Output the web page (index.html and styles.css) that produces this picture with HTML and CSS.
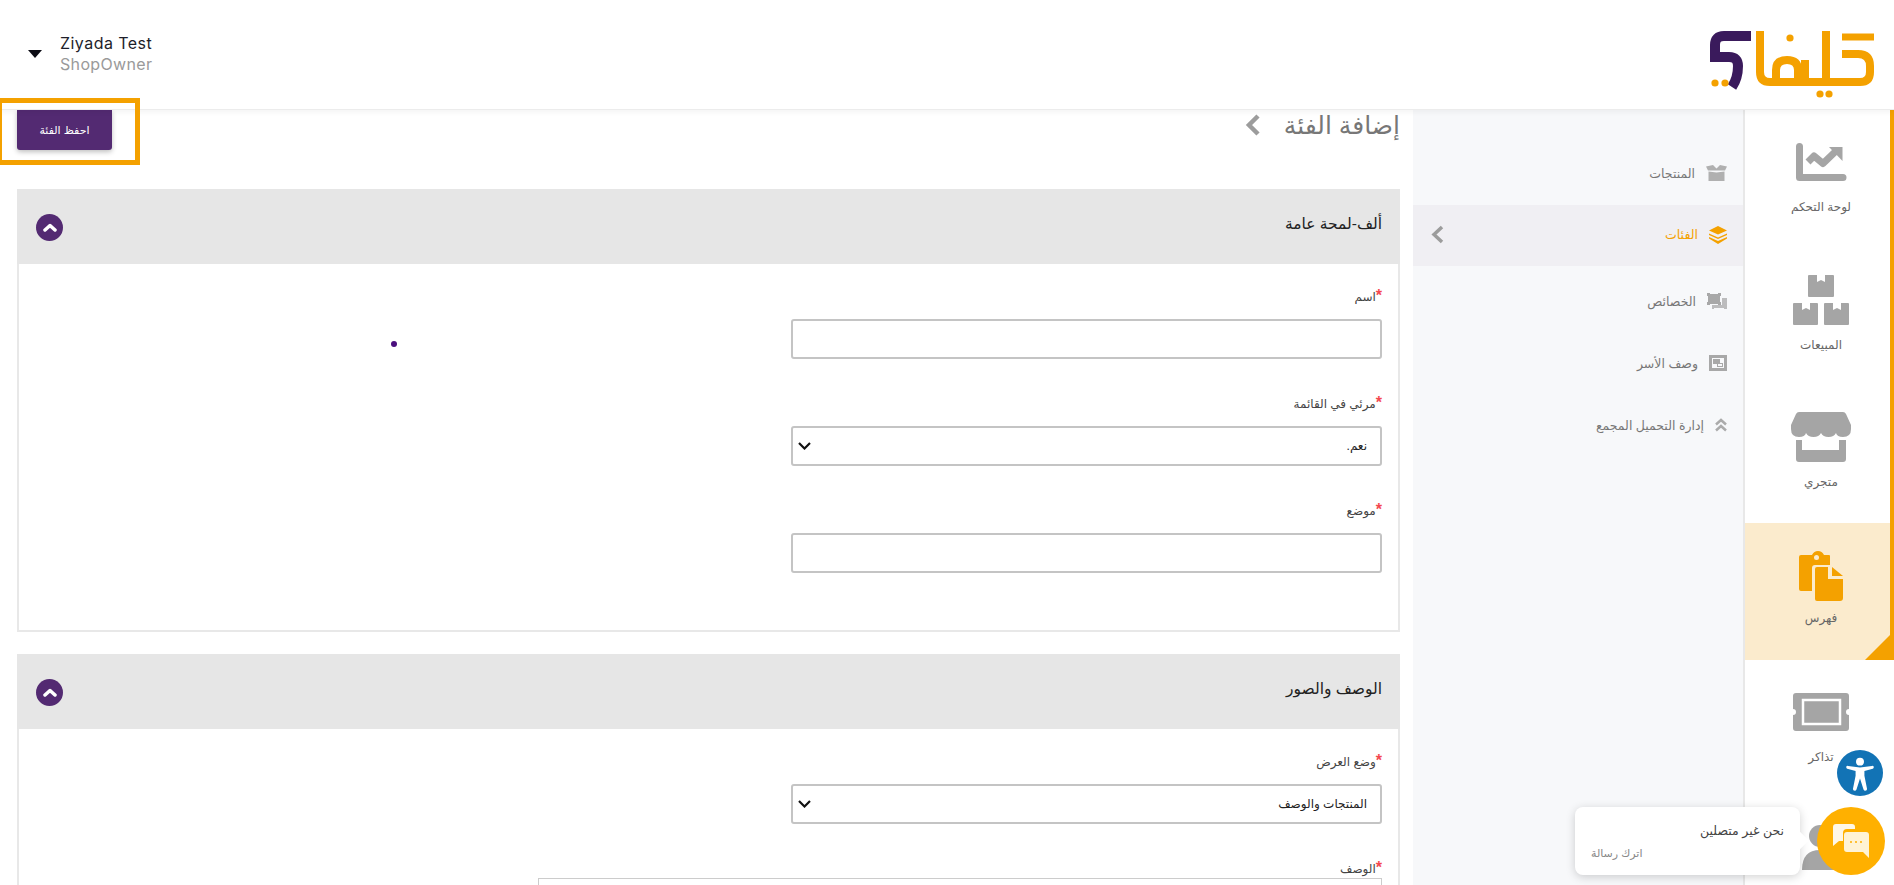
FILE: index.html
```html
<!DOCTYPE html>
<html lang="ar">
<head>
    <meta charset="UTF-8">
    <meta name="viewport" content="width=device-width, initial-scale=1.0">
    <title>إضافة الفئة</title>
    <link rel="stylesheet" href="styles.css">
</head>
<body>
    <header class="topbar">
        <div class="user">
            <span class="user-caret"></span>
            <div>
                <div class="user-name">Ziyada Test</div>
                <div class="user-role">ShopOwner</div>
            </div>
        </div>
        <svg class="logo" width="180" height="76" viewBox="0 0 180 76" fill="none">
            <path d="M51 12H24Q15 12 15 21V33H29Q38 33 38 42Q38 54 32 63" stroke="#3a1a5c" stroke-width="10"/>
            <circle cx="15" cy="59" r="3.600" fill="#f4a100"/>
            <circle cx="25" cy="59" r="3.600" fill="#f4a100"/>
            <g stroke="#f4a100" stroke-width="8">
                <path d="M60 7V48Q60 58 70 58H160Q170 58 170 48V42Q170 30 158 30H142"/>
                <path d="M142 13H174" stroke-width="7"/>
                <path d="M76 58V46Q76 36 87 36Q98 36 98 46V58"/>
                <path d="M105 36V58"/>
                <path d="M126 7V58"/>
            </g>
            <g fill="#f4a100">
                <circle cx="90" cy="14" r="3.600"/>
                <circle cx="120" cy="70" r="3.600"/>
                <circle cx="129" cy="70" r="3.600"/>
            </g>
        </svg>
    </header>

    <div class="shell">
        <!-- main rail -->
        <nav class="rail">
            <a class="rail-item">
                <svg width="60" height="50" viewBox="0 0 60 50" fill="none" stroke="#a5a5a5" stroke-width="7" stroke-linejoin="round">
                    <path d="M8.500 9.500V40.500H52" stroke-linecap="round"/>
                    <path d="M17 25L23 19L32 26.500L45 14"/>
                    <path d="M38 10H51.500V24Z" fill="#a5a5a5" stroke="none"/>
                </svg>
                <span>لوحة التحكم</span>
            </a>
            <a class="rail-item">
                <svg width="60" height="50" viewBox="0 0 60 50" fill="#a5a5a5">
                    <path d="M18 0H26V7L30 5L34 7V0H42Q43 0 43 1V21Q43 22 42 22H18Q17 22 17 21V1Q17 0 18 0Z"/>
                    <path d="M3 28H11V35L15 33L19 35V28H26Q27 28 27 29V49Q27 50 26 50H3Q2 50 2 49V29Q2 28 3 28Z"/>
                    <path d="M34 28H42V35L46 33L50 35V28H57Q58 28 58 29V49Q58 50 57 50H34Q33 50 33 49V29Q33 28 34 28Z"/>
                </svg>
                <span>المبيعات</span>
            </a>
            <a class="rail-item">
                <svg width="62" height="50" viewBox="0 0 62 50" fill="#a5a5a5">
                    <path d="M9 0H53Q55 0 56 2L61 13V17Q61 25 53 25Q47 25 46 21Q44 25 38.500 25Q33 25 31 21Q29 25 23.500 25Q18 25 16 21Q15 25 9 25Q1 25 1 17V13L6 2Q7 0 9 0Z"/>
                    <path d="M6 28H12V38H49V28H56V47Q56 50 53 50H9Q6 50 6 47Z"/>
                </svg>
                <span>متجري</span>
            </a>
            <a class="rail-item active">
                <svg width="60" height="52" viewBox="0 0 60 52" fill="#f4a100">
                    <path d="M10 5H21Q23 1 27 1Q31 1 33 5H38Q39 5 39 6V15H24Q21 15 21 18V41H10Q8 41 8 39V7Q8 5 10 5Z"/>
                    <circle cx="25.500" cy="7.500" r="2.500" fill="#fbebcd"/>
                    <path d="M26 17H37V29H52V48Q52 51 49 51H26Q24 51 24 49V19Q24 17 26 17Z"/>
                    <path d="M41 17L52 26H41Z"/>
                </svg>
                <span>فهرس</span>
                <i class="corner"></i>
            </a>
            <a class="rail-item">
                <svg width="60" height="50" viewBox="0 0 60 50" fill="#a5a5a5">
                    <path d="M5 6H55Q58 6 58 9V22A3 3 0 0 0 58 28V41Q58 44 55 44H5Q2 44 2 41V28A3 3 0 0 0 2 22V9Q2 6 5 6Z"/>
                    <rect x="12" y="13" width="37" height="24" fill="none" stroke="#fff" stroke-width="2.500"/>
                </svg>
                <span>تذاكر</span>
            </a>
            <a class="rail-item">
                <svg width="60" height="50" viewBox="0 0 60 50" fill="#a5a5a5">
                    <circle cx="29" cy="11" r="11"/>
                    <path d="M11 45Q11 25 29 25Q47 25 47 45Z"/>
                </svg>
            </a>
        </nav>

        <!-- sub menu -->
        <aside class="subnav">
            <a class="subnav-row">
                <svg width="21" height="16" viewBox="0 0 21 16" fill="#b0b0b0">
                    <path d="M0 1.500L7 0L10.500 3.500L14 0L21 1.500L19 5.500H2Z"/>
                    <path d="M2.500 6.500L10.500 7.500L18.500 6.500V16H2.500Z"/>
                </svg>
                <span>المنتجات</span>
            </a>
            <a class="subnav-row active">
                <svg width="18" height="18" viewBox="0 0 18 18" fill="#f4a100">
                    <path d="M9 0L18 4.500L9 8.500L0 4.500Z"/>
                    <path d="M0 7.500L9 11.500L18 7.500V9L9 13L0 9Z"/>
                    <path d="M0 11L9 15L18 11V12.500L9 18L0 12.500Z"/>
                </svg>
                <span>الفئات</span>
                <svg class="subnav-chevron" width="13" height="19" viewBox="0 0 13 19" fill="none" stroke="#9c9c9c" stroke-width="3.500">
                    <path d="M11 2L3 9.500L11 17"/>
                </svg>
            </a>
            <a class="subnav-row row-gap">
                <svg width="20" height="16" viewBox="0 0 20 16" fill="#a8a8a8">
                    <path d="M0 0H3V1H11V0H14V3H13V9H14V12H11V11H3V12H0V9H1V3H0Z"/>
                    <path d="M15 5H20V16H17V15H7V16H5V12H15Z" opacity=".75"/>
                </svg>
                <span>الخصائص</span>
            </a>
            <a class="subnav-row">
                <svg width="18" height="16" viewBox="0 0 18 16" fill="#a8a8a8">
                    <path d="M0 0H18V16H0ZM3 3V13H15V3Z" fill-rule="evenodd"/>
                    <path d="M4 4H11V8H14V12H8V9H4Z"/>
                    <path d="M9 9H13V11H9Z" fill="#f7f8fa"/>
                </svg>
                <span>وصف الأسر</span>
            </a>
            <a class="subnav-row">
                <svg width="12" height="14" viewBox="0 0 12 14" fill="none" stroke="#ababab" stroke-width="2.500">
                    <path d="M1 6.500L6 2L11 6.500M1 12.500L6 8L11 12.500"/>
                </svg>
                <span>إدارة التحميل المجمع</span>
            </a>
        </aside>

        <main class="content">
            <div class="page-head">
                <h1>إضافة الفئة
                    <svg width="16" height="22" viewBox="0 0 16 22" fill="none" stroke="#9c9c9c" stroke-width="4.500"><path d="M13 2L4 11L13 20"/></svg>
                </h1>
                <button class="btn-save">احفظ الفئة</button>
            </div>

            <section class="card">
                <div class="card-head">
                    <h2>ألف-لمحة عامة</h2>
                    <span class="toggle"><svg width="14" height="9" viewBox="0 0 14 9" fill="none" stroke="#fff" stroke-width="3.500" stroke-linecap="round" stroke-linejoin="round"><path d="M2 7L7 2.500L12 7"/></svg></span>
                </div>
                <div class="card-body">
                    <div class="field">
                        <label><b>*</b>اسم</label>
                        <input type="text">
                    </div>
                    <div class="field">
                        <label><b>*</b>مرئي في القائمة</label>
                        <select><option>نعم.</option></select>
                    </div>
                    <div class="field">
                        <label><b>*</b>موضع</label>
                        <input type="text">
                    </div>
                </div>
            </section>

            <section class="card">
                <div class="card-head">
                    <h2>الوصف والصور</h2>
                    <span class="toggle"><svg width="14" height="9" viewBox="0 0 14 9" fill="none" stroke="#fff" stroke-width="3.500" stroke-linecap="round" stroke-linejoin="round"><path d="M2 7L7 2.500L12 7"/></svg></span>
                </div>
                <div class="card-body">
                    <div class="field">
                        <label><b>*</b>وضع العرض</label>
                        <select><option>المنتجات والوصف</option></select>
                    </div>
                    <div class="field field-tight">
                        <label><b>*</b>الوصف</label>
                        <div class="editor"></div>
                    </div>
                </div>
            </section>

            <span class="dot"></span>
        </main>
    </div>

    <!-- orange highlight around the save button -->
    <div class="highlight"></div>

    <div class="a11y">
        <svg width="34" height="38" viewBox="0 0 34 38" fill="#fff">
            <circle cx="17" cy="5" r="4.500"/>
            <path d="M1.500 10.500Q1 12.500 2.500 13L12 15.500V21L9 36Q9 38 11 38Q12.500 38 13 36.500L17 24L21 36.500Q21.500 38 23 38Q25 38 25 36L22 21V15.500L31.500 13Q33 12.500 32.500 10.500Q32 9.500 30.500 9.800L17 11.500L3.500 9.800Q2 9.500 1.500 10.500Z"/>
        </svg>
    </div>

    <div class="chat-bubble">
        <div class="chat-title">نحن غير متصلين</div>
        <div class="chat-sub">اترك رسالة</div>
    </div>
    <div class="chat-fab">
        <svg width="36" height="34" viewBox="0 0 36 34">
            <path d="M3 0H19Q22 0 22 3V5H14Q10 5 10 9V17H6L0 22V3Q0 0 3 0Z" fill="#fff" opacity=".9"/>
            <path d="M14 8H33Q36 8 36 11V34L30 28H14Q11 28 11 25V11Q11 8 14 8Z" fill="#fff3d6"/>
            <g fill="#ffb000"><circle cx="18" cy="18" r="1"/><circle cx="23" cy="18" r="1"/><circle cx="28" cy="18" r="1"/></g>
        </svg>
    </div>
</body>
</html>
```

FILE: styles.css
```css
* { box-sizing: border-box; }
html, body { margin: 0; height: 885px; overflow: hidden; }
body { font-family: "Liberation Sans", "DejaVu Sans", sans-serif; background: #fff; color: #333; position: relative; }

.topbar { height: 110px; display: flex; justify-content: space-between; align-items: flex-start; background: #fff; border-bottom: 1px solid #ececec; box-shadow: 0 2px 6px rgba(0,0,0,.05); position: relative; z-index: 5; padding: 0 14px 0 28px; }
.user { display: flex; align-items: center; gap: 18px; padding-top: 33px; }
.user-caret { width: 0; height: 0; border-left: 7.500px solid transparent; border-right: 7.500px solid transparent; border-top: 8px solid #0b0b14; }
.user-name { font-family: Inter, sans-serif; font-size: 16px; line-height: 21px; letter-spacing: .45px; color: #1e1e2a; }
.user-role { font-family: Inter, sans-serif; font-size: 16px; line-height: 21px; letter-spacing: .35px; color: #9a9a9a; }
.logo { margin-top: 24px; }

.shell { display: flex; direction: rtl; height: 775px; }

.rail { width: 149px; flex: none; padding-right: 4px; position: relative; background: #fff; overflow: hidden; }
.rail::after { content: ""; position: absolute; top: 0; right: 0; width: 4px; height: 535px; background: #f4a100; }
.rail-item { display: flex; flex-direction: column; align-items: center; height: 137.500px; padding: 27px 0 0 7px; position: relative; font-size: 12px; color: #666; }
.rail-item svg { margin-bottom: 13px; flex: none; }
.rail-item.active { background: #fbebcd; }
.rail-item.active svg { margin-bottom: 9px; }
.corner { position: absolute; right: -4px; bottom: 0; width: 29px; height: 29px; background: #f4a100; clip-path: polygon(100% 0, 100% 100%, 0 100%); }

.subnav { width: 332px; flex: none; background: #f7f8fa; border-right: 2px solid #e8e8e8; padding-top: 33px; }
.subnav-row { display: flex; align-items: center; gap: 11px; height: 62px; padding: 0 16px 2px 0; font-size: 12.500px; color: #777; position: relative; }
.subnav-row.active { background: #f0eff3; color: #f4a100; height: 61px; }
.row-gap { margin-top: 5px; }
.subnav-chevron { position: absolute; left: 18px; top: 20px; }

.content { flex: 1; min-width: 0; padding: 0 13px 0 17px; position: relative; overflow: hidden; }
.page-head { display: flex; justify-content: space-between; align-items: flex-start; height: 79px; }
.page-head h1 { margin: 0; font-size: 25px; line-height: 30px; font-weight: 400; color: #777; display: flex; align-items: center; gap: 23px; }
.btn-save { width: 95px; height: 40px; border: 0; border-radius: 0 0 3px 3px; background: #532a72; color: #fff; font: 11px "Liberation Sans", "DejaVu Sans", sans-serif; box-shadow: 0 2px 5px rgba(0,0,0,.25); }

.card { margin-bottom: 22px; }
.card-head { height: 75px; background: #e6e6e6; display: flex; justify-content: space-between; align-items: center; padding: 0 18px 0 19px; }
.card-head h2 { margin: 0 0 6px; font-size: 15.500px; font-weight: 400; color: #222; }
.toggle { width: 27px; height: 27px; margin-top: 2px; border-radius: 50%; background: #532a72; display: flex; align-items: center; justify-content: center; }
.card-body { border: 2px solid #e8e8e8; border-top: 0; padding: 25px 16px 20px; }

.field { margin-bottom: 37px; }
.field-tight { margin-bottom: 0; }
.field label { display: block; height: 30px; font-size: 12px; line-height: 16px; color: #444; }
.field label b { color: #f4484f; font-weight: 700; font-size: 16px; line-height: 10px; }
.field-tight label { height: 17px; }
.field input, .field select { display: block; width: 591px; height: 40px; border: 2px solid #c4c4c4; border-radius: 3px; background: #fff; font: 12px "Liberation Sans", "DejaVu Sans", sans-serif; color: #222; padding: 0 13px; }
.field select { appearance: none; background: #fff url("data:image/svg+xml,%3Csvg xmlns='http://www.w3.org/2000/svg' width='13' height='8' fill='none' stroke='%23111' stroke-width='2.200'%3E%3Cpath d='M1 1l5.500 5.500L12 1'/%3E%3C/svg%3E") no-repeat left 5px center; }
.editor { width: 844px; height: 300px; border: 1px solid #ccc; }

.dot { position: absolute; left: 391px; top: 231px; width: 6px; height: 6px; border-radius: 50%; background: #4b0f7e; }

.highlight { position: absolute; left: -3px; top: 98px; width: 143px; height: 67px; border: 5px solid #f4a100; z-index: 6; }

.a11y { position: absolute; left: 1837px; top: 750px; width: 46px; height: 46px; border-radius: 50%; background: #1273b5; display: flex; align-items: center; justify-content: center; z-index: 8; padding: 2px 0 0; }
.a11y svg { width: 30px; height: 34px; }
.chat-bubble { position: absolute; left: 1575px; top: 807px; width: 225px; height: 68px; border-radius: 8px; background: #fff; box-shadow: 0 2px 10px rgba(0,0,0,.18); direction: rtl; padding: 15px 16px 0; z-index: 8; }
.chat-bubble::after { content: ""; position: absolute; left: 218px; top: 27px; width: 13px; height: 13px; background: #fff; transform: rotate(45deg); }
.chat-title { font-size: 12.500px; line-height: 18px; color: #444; }
.chat-sub { font-size: 11px; line-height: 16px; margin-top: 5px; color: #888; text-align: left; }
.chat-fab { position: absolute; left: 1817px; top: 807px; width: 68px; height: 68px; border-radius: 50%; background: #ffb000; display: flex; align-items: center; justify-content: center; z-index: 9; }
```
